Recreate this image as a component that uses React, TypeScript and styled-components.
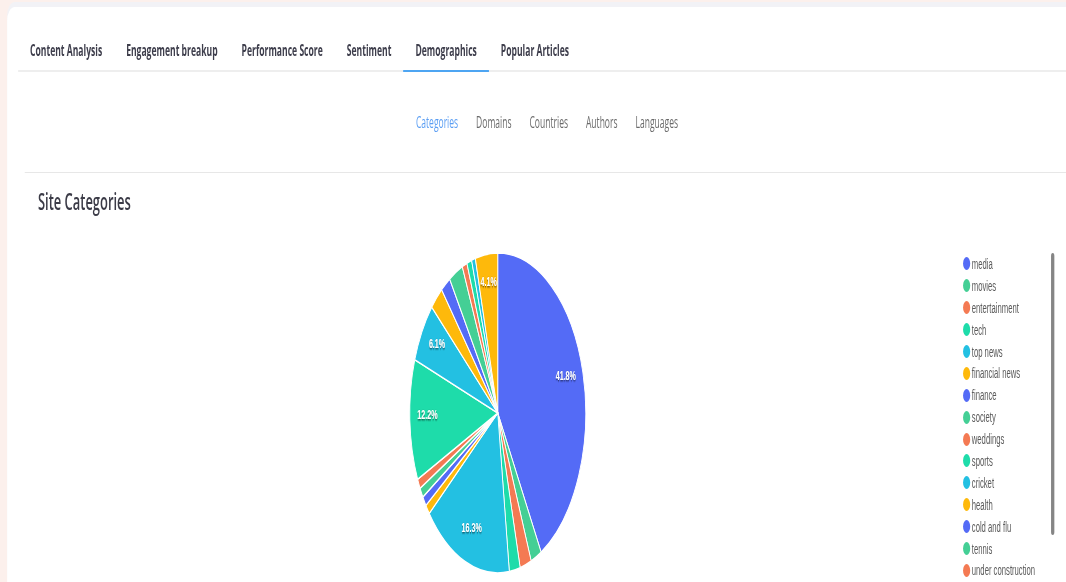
import React from "react";
import styled, { createGlobalStyle } from "styled-components";

// the dashboard is laid out wide and squeezed horizontally to fit the frame
const S = 0.55;
const hx = (px: number) => `${(px / S).toFixed(2)}px`;

const GlobalStyle = createGlobalStyle`
  html, body {
    margin: 0;
    padding: 0;
    background: #fcf0ec;
    overflow: hidden;
  }
  body {
    font-family: "Open Sans", "Liberation Sans", sans-serif;
  }
`;

const Root = styled.div`
  width: ${hx(1094)};
  padding-top: 7px;
  transform: scaleX(${S});
  transform-origin: 0 0;
`;

const Card = styled.div`
  margin-left: ${hx(7)};
  width: ${hx(1080)};
  min-height: 575px;
  padding-top: 22px;
  box-sizing: border-box;
  background: #ffffff;
  border-radius: 14px 14px 0 0;
  box-shadow: 0 -5px 0 0 #f2f2f6;
`;

const TabBar = styled.nav`
  display: flex;
  margin-left: ${hx(11)};
  border-bottom: 2px solid #eeeeee;
`;

const Tab = styled.div<{ $active?: boolean }>`
  display: flex;
  align-items: center;
  height: 41px;
  margin-bottom: -2px;
  padding: 0 ${hx(12)};
  border-bottom: 2px solid ${(p) => (p.$active ? "#4ea5f2" : "transparent")};
  font-size: 15.6px;
  font-weight: 700;
  color: #3e3e4c;
  white-space: nowrap;
`;

const SubNav = styled.div`
  display: flex;
  justify-content: center;
  align-items: center;
  height: 100px;
`;

const SubTab = styled.div<{ $active?: boolean }>`
  padding: 0 ${hx(9)};
  font-size: 15.5px;
  font-weight: 400;
  color: ${(p) => (p.$active ? "#5b9ef3" : "#6b6b6b")};
`;

const Section = styled.section`
  margin-left: ${hx(18)};
  padding-left: ${hx(13)};
  border-top: 1px solid #e7e7e7;
`;

const Title = styled.h2`
  margin: 0;
  padding-top: 13px;
  line-height: 30px;
  font-size: 23.5px;
  font-weight: 600;
  color: #3b3b47;
`;

const ChartRow = styled.div`
  display: flex;
  margin-top: 27px;
`;

const PieBox = styled.div`
  flex: 1;
  display: flex;
  justify-content: center;
`;

const Legend = styled.ul`
  position: relative;
  width: ${hx(129)};
  margin: 0;
  padding: 10px 0 0 ${hx(5)};
  list-style: none;
  box-sizing: border-box;
`;

const LegendItem = styled.li`
  display: flex;
  align-items: center;
  height: 21.9px;
  font-family: "Liberation Sans", Arial, sans-serif;
  font-size: 14px;
  color: #5a5a5a;
  white-space: nowrap;
`;

const Dot = styled.span<{ $color: string }>`
  width: 13px;
  height: 13px;
  margin-right: 3px;
  border-radius: 50%;
  background: ${(p) => p.$color};
  flex: none;
`;

const ScrollThumb = styled.div`
  position: absolute;
  top: 10px;
  left: ${hx(93)};
  width: 6px;
  height: 282px;
  border-radius: 3px;
  background: #858585;
`;

const PALETTE = ["#546bf6", "#44cf95", "#f47a53", "#1edcaa", "#23c0e2", "#feb90b"];

const categories: { name: string; value: number }[] = [
  { name: "media", value: 41.8 },
  { name: "movies", value: 2.0 },
  { name: "entertainment", value: 2.1 },
  { name: "tech", value: 2.0 },
  { name: "top news", value: 16.3 },
  { name: "financial news", value: 1.0 },
  { name: "finance", value: 1.0 },
  { name: "society", value: 1.0 },
  { name: "weddings", value: 1.0 },
  { name: "sports", value: 12.2 },
  { name: "cricket", value: 6.1 },
  { name: "health", value: 2.5 },
  { name: "cold and flu", value: 1.8 },
  { name: "tennis", value: 2.6 },
  { name: "under construction", value: 0.9 },
  { name: "business", value: 0.9 },
  { name: "politics", value: 0.7 },
  { name: "lifestyle", value: 4.1 },
];

// rows that fit in the legend's scroll window
const LEGEND_ROWS = 15;

const R = 160;
const C = 170;

const point = (deg: number, r: number) => {
  const a = (deg * Math.PI) / 180;
  return [C + r * Math.sin(a), C - r * Math.cos(a)];
};

const PieChart: React.FC = () => {
  const total = categories.reduce((s, c) => s + c.value, 0);
  let start = 0;
  const slices = categories.map((c, i) => {
    const sweep = (c.value / total) * 360;
    const end = start + sweep;
    const [x0, y0] = point(start, R);
    const [x1, y1] = point(end, R);
    const mid = start + sweep / 2;
    const [lx, ly] = point(mid, 0.8 * R);
    const d = `M${C},${C} L${x0.toFixed(2)},${y0.toFixed(2)} A${R},${R} 0 ${sweep > 180 ? 1 : 0} 1 ${x1.toFixed(2)},${y1.toFixed(2)} Z`;
    start = end;
    return { d, color: PALETTE[i % 6], lx, ly, value: c.value };
  });

  return (
    <svg width="340" height="340" viewBox="0 0 340 340">
      <defs>
        <filter id="labelShadow" x="-20%" y="-40%" width="140%" height="180%">
          <feDropShadow dx="0" dy="1" stdDeviation="1" floodColor="#000" floodOpacity="0.7" />
        </filter>
      </defs>
      {slices.map((s, i) => (
        <path key={i} d={s.d} fill={s.color} stroke="#fff" strokeWidth={1.6} strokeLinejoin="round" />
      ))}
      {slices
        .filter((s) => s.value >= 4)
        .map((s, i) => (
          <text
            key={i}
            x={s.lx}
            y={s.ly}
            textAnchor="middle"
            fill="#fff"
            fontFamily="Liberation Sans, Arial, sans-serif"
            fontWeight="bold"
            fontSize="13"
            filter="url(#labelShadow)"
          >
            {s.value.toFixed(1)}%
          </text>
        ))}
    </svg>
  );
};

const tabs = ["Content Analysis", "Engagement breakup", "Performance Score", "Sentiment", "Demographics", "Popular Articles"];
const subTabs = ["Categories", "Domains", "Countries", "Authors", "Languages"];

export default function App() {
  return (
    <>
      <GlobalStyle />
      <Root>
        <Card>
          <TabBar>
            {tabs.map((t) => (
              <Tab key={t} $active={t === "Demographics"}>
                {t}
              </Tab>
            ))}
          </TabBar>
          <SubNav>
            {subTabs.map((t) => (
              <SubTab key={t} $active={t === "Categories"}>
                {t}
              </SubTab>
            ))}
          </SubNav>
          <Section>
            <Title>Site Categories</Title>
            <ChartRow>
              <PieBox>
                <PieChart />
              </PieBox>
              <Legend>
                {categories.slice(0, LEGEND_ROWS).map((c, i) => (
                  <LegendItem key={c.name}>
                    <Dot $color={PALETTE[i % 6]} />
                    {c.name}
                  </LegendItem>
                ))}
                <ScrollThumb />
              </Legend>
            </ChartRow>
          </Section>
        </Card>
      </Root>
    </>
  );
}
